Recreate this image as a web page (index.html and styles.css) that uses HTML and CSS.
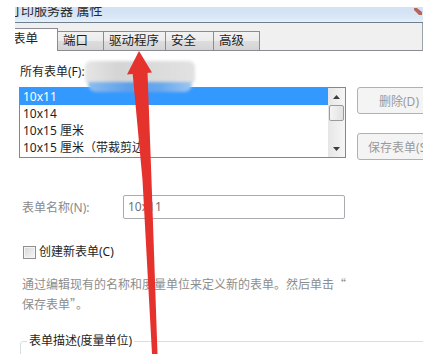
FILE: index.html
```html
<!DOCTYPE html>
<html lang="zh-CN">
<head>
    <meta charset="UTF-8">
    <title>打印服务器 属性</title>
    <link rel="stylesheet" href="styles.css">
</head>
<body>
    <div class="window">
        <div class="titlebar">
            <span class="title">打印服务器 属性</span>
            <svg class="corner" width="8" height="7" viewBox="0 0 8 7"><polygon points="0,0 3,0 8,4 8,7 5,7 0,2" fill="#b8645c"/></svg>
        </div>
        <div class="tabs">
            <div class="tab active">表单</div>
            <div class="tab">端口</div>
            <div class="tab">驱动程序</div>
            <div class="tab tab-mid">安全</div>
            <div class="tab">高级</div>
        </div>
        <div class="panel">
            <div class="label">所有表单(F):</div>
            <div class="forms-row">
                <div class="listbox">
                    <ul class="items">
                        <li class="selected">10x11</li>
                        <li>10x14</li>
                        <li>10x15 厘米</li>
                        <li>10x15 厘米（带裁剪边）</li>
                    </ul>
                    <div class="scrollbar">
                        <div class="sb-btn"><svg width="7" height="4" viewBox="0 0 7 4"><polygon points="3.5,0 7,4 0,4" fill="#3d3d3d"/></svg></div>
                        <div class="thumb"></div>
                        <div class="sb-track"></div>
                        <div class="sb-btn"><svg width="7" height="4" viewBox="0 0 7 4"><polygon points="0,0 7,0 3.5,4" fill="#3d3d3d"/></svg></div>
                    </div>
                </div>
                <div class="buttons">
                    <button disabled>删除(D)</button>
                    <button disabled>保存表单(S)</button>
                </div>
            </div>
            <div class="name-row">
                <label>表单名称(N):</label>
                <div class="input">10x11</div>
            </div>
            <div class="check"><span class="box"></span>创建新表单(C)</div>
            <p class="hint">通过编辑现有的名称和度量单位来定义新的表单。然后单击<span class="cjk">“</span><br>保存表单<span class="cjk">”。</span></p>
            <fieldset class="group">
                <legend>表单描述(度量单位)</legend>
            </fieldset>
        </div>
    </div>

    <!-- blurred area over the screenshot -->
    <div class="smudge">
        <div class="smudge-gray"></div>
        <div class="smudge-blue"></div>
    </div>

    <!-- red arrow drawn over the dialog -->
    <svg class="arrow" width="441" height="354" viewBox="0 0 441 354">
        <polygon points="132.5,72 147.5,72 151.5,180 157.5,354 152,354 142.5,180" fill="#e5322d"/>
        <polygon points="139,51 152,72.5 127,74.5" fill="#e5322d"/>
    </svg>
</body>
</html>
```

FILE: styles.css
```css
body {
    margin: 0;
    background: #ffffff;
    font-family: "Noto Sans", "Noto Sans CJK SC", sans-serif;
    font-size: 12px;
    color: #1e1e1e;
}

.cjk {
    font-family: "Noto Sans CJK SC", sans-serif;
}

.window {
    width: 408px;
    height: 347px;
    margin: 7px 0 0 15px;
    overflow: hidden;
    background: #ffffff;
}

.titlebar {
    display: flex;
    align-items: flex-start;
    height: 15px;
    background: linear-gradient(#d2e2f4, #d9e7f6 70%, #e9f1fa);
    border-bottom: 1px solid #6f7f8e;
}

.title {
    margin: -4px 0 0 -7px;
    font-size: 13px;
    line-height: 15px;
    color: #2a2a2a;
    white-space: nowrap;
}

.corner {
    margin: 1px 1px 0 auto;
}

.tabs {
    display: flex;
    align-items: flex-end;
    height: 27px;
    background: #f0f0f0;
    border-bottom: 1px solid #898c95;
    border-right: 1px solid #9da3aa;
}

.tab {
    box-sizing: border-box;
    height: 19px;
    min-width: 47px;
    padding: 0 6px 0 5px;
    margin-right: -1px;
    border: 1px solid #898c95;
    border-bottom: none;
    background: linear-gradient(#f2f2f2, #ebebeb 50%, #dddddd 50%, #d4d4d4);
    line-height: 17px;
    font-size: 12.5px;
    white-space: nowrap;
}

.tab-mid {
    min-width: 49px;
}

.tab.active {
    position: relative;
    z-index: 1;
    width: 65px;
    height: 23px;
    margin-left: -22px;
    margin-bottom: -1px;
    padding: 1px 0 0 19px;
    background: #ffffff;
}

.panel {
    padding: 13px 0 0 5px;
}

.label {
    line-height: 16px;
}

.forms-row {
    display: flex;
    margin: 7px 0 0 -1px;
}

.listbox {
    display: flex;
    flex-shrink: 0;
    box-sizing: border-box;
    width: 327px;
    height: 71px;
    border: 1px solid #828790;
}

.items {
    flex: 1;
    list-style: none;
    margin: 0;
    padding: 0;
}

.items li {
    height: 17px;
    line-height: 17px;
    padding-left: 3px;
    white-space: nowrap;
}

.items li.selected {
    background: #3399ff;
    color: #ffffff;
}

.scrollbar {
    display: flex;
    flex-direction: column;
    align-items: center;
    width: 17px;
    background: linear-gradient(to right, #e6e6e6, #f6f6f6);
}

.sb-btn {
    display: flex;
    align-items: center;
    justify-content: center;
    height: 17px;
}

.thumb {
    box-sizing: border-box;
    width: 15px;
    height: 16px;
    border: 1px solid #9b9b9b;
    border-radius: 2px;
    background: linear-gradient(to right, #f4f4f4, #e2e2e2);
}

.sb-track {
    flex: 1;
}

.buttons {
    display: flex;
    flex-direction: column;
    gap: 19px;
    margin-left: 11px;
    flex-shrink: 0;
}

.buttons button {
    width: 84px;
    height: 27px;
    padding: 0;
    border: 1px solid #adb2b5;
    border-radius: 3px;
    background: #f4f4f4;
    color: #9a9a9a;
    font: inherit;
    white-space: nowrap;
}

.name-row {
    display: flex;
    align-items: center;
    margin-top: 35px;
    padding-left: 2px;
}

.name-row label {
    width: 101px;
    color: #8a8a8a;
}

.input {
    box-sizing: border-box;
    width: 222px;
    height: 24px;
    padding-left: 4px;
    border: 1px solid #a9abb0;
    border-radius: 2px;
    line-height: 22px;
    color: #707070;
}

.check {
    display: flex;
    align-items: center;
    gap: 3px;
    margin: 25px 0 0 3px;
    line-height: 16px;
}

.box {
    box-sizing: border-box;
    width: 13px;
    height: 13px;
    border: 1px solid #8e8f8f;
    background: linear-gradient(135deg, #d6d6d6, #f8f8f8);
    box-shadow: inset 0 0 0 1px #f4f4f4;
}

.hint {
    margin: 14px 0 0 2px;
    line-height: 19px;
    color: #8d8d8d;
    white-space: nowrap;
}

.group {
    box-sizing: border-box;
    width: 420px;
    height: 40px;
    margin: 19px 0 0 0;
    padding: 0 0 0 6px;
    border: 1px solid #d5dfe5;
    border-radius: 3px;
}

.group legend {
    padding: 0 2px;
    line-height: 16px;
}

.smudge {
    position: absolute;
    left: 85px;
    top: 61px;
    width: 110px;
    filter: blur(1.5px);
}

.smudge-gray {
    height: 21px;
    border-radius: 6px 6px 0 0;
    background: linear-gradient(to right, #e6e6e6, #d4d4d4 30%, #dadada 60%, #e2e2e2);
}

.smudge-blue {
    height: 10px;
    margin: 0 3px;
    border-radius: 0 0 8px 8px;
    background: linear-gradient(to right, #8cbcf0, #5c9fe9 40%, #6aa8ec 70%, #9cc6f2);
}

.arrow {
    position: absolute;
    left: 0;
    top: 0;
    pointer-events: none;
}
```
